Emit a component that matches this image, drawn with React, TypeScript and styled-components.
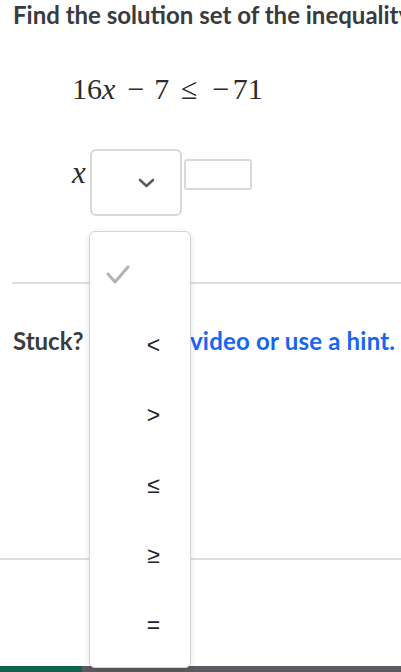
import styled, { createGlobalStyle } from "styled-components";

const GlobalStyle = createGlobalStyle`
  html, body {
    margin: 0;
    padding: 0;
    background: #ffffff;
    overflow: hidden;
  }
  body {
    font-family: Lato, "Noto Sans", sans-serif;
  }
`;

const Page = styled.div`
  position: relative;
  min-height: 672px;
  display: flex;
  flex-direction: column;
  overflow: hidden;
`;

const Content = styled.div`
  padding-left: 13px;
`;

const Title = styled.h2`
  margin: 0;
  font-size: 24px;
  line-height: 30px;
  font-weight: 700;
  color: #393b3f;
  white-space: nowrap;
`;

const MathLine = styled.div`
  margin: 41px 0 0 59px;
  font-family: "Liberation Serif", "Times New Roman", serif;
  font-size: 30px;
  line-height: 36px;
  color: #2b2b2b;
  white-space: nowrap;
`;

const Var = styled.span`
  font-style: italic;
  margin-right: 0.08em;
`;

const Op = styled.span<{ $space: number }>`
  display: inline-block;
  width: 0.778em;
  text-align: center;
  margin: 0 ${(p) => p.$space}em;
`;

const Minus = styled.span`
  display: inline-block;
  width: 0.778em;
  text-align: center;
`;

const AnswerRow = styled.div`
  margin: 42px 0 0 59px;
  display: flex;
  align-items: flex-start;
  gap: 2px;
`;

const VarLabel = styled.span`
  width: 16px;
  margin-top: 6px;
  font-family: "Liberation Serif", "Times New Roman", serif;
  font-style: italic;
  font-size: 31px;
  line-height: 36px;
  color: #2b2b2b;
`;

const Select = styled.div`
  box-sizing: border-box;
  width: 92px;
  height: 67px;
  border: 2px solid #d9d9d9;
  border-radius: 6px;
  display: flex;
  align-items: center;
  justify-content: flex-end;
  padding-right: 25px;
  background: #fff;
`;

const TextInput = styled.div`
  box-sizing: border-box;
  margin-top: 10px;
  width: 68px;
  height: 31px;
  border: 2px solid #d9d9d9;
  border-radius: 3px;
`;

const Rule = styled.div<{ $inset?: number }>`
  height: 2px;
  background: #e0e0e0;
  margin-left: ${(p) => p.$inset ?? 0}px;
`;

const Stuck = styled.p`
  margin: 42px 0 0;
  font-size: 24px;
  line-height: 30px;
  font-weight: 700;
  color: #393b3f;
  white-space: nowrap;
`;

const HintLink = styled.span`
  margin-left: 6px;
  color: #1865f2;
  letter-spacing: 0.2px;
`;

const Spacer = styled.div`
  flex: 1;
`;

const Footer = styled.div`
  height: 6px;
  display: flex;
  background: #5b5a5f;
`;

const FooterProgress = styled.div`
  width: 82px;
  background: #12604f;
`;

const Menu = styled.div`
  position: absolute;
  left: 89px;
  top: 231px;
  box-sizing: border-box;
  width: 102px;
  height: 437px;
  padding: 8px 0;
  background: #fff;
  border: 1px solid #d4d4d4;
  border-radius: 6px;
  box-shadow: 0 2px 6px rgba(0, 0, 0, 0.12);
`;

const MenuItem = styled.div`
  height: 70px;
  display: flex;
  align-items: center;
  padding: 0 15px 0 16px;
`;

const CheckSlot = styled.div`
  width: 26px;
  display: flex;
  align-items: center;
`;

const ItemLabel = styled.span`
  flex: 1;
  text-align: center;
  font-family: "Liberation Sans", Arial, sans-serif;
  font-size: 23px;
  color: #21242c;
`;

const Chevron = () => (
  <svg width="17" height="10" viewBox="0 0 17 10">
    <polyline
      points="2,2 8.5,8 15,2"
      fill="none"
      stroke="#5c5c5c"
      strokeWidth="2.6"
      strokeLinecap="round"
      strokeLinejoin="round"
    />
  </svg>
);

const Check = () => (
  <svg width="24" height="20" viewBox="0 0 24 20">
    <polyline
      points="2,9 9,17 22,2"
      fill="none"
      stroke="#b3b3b3"
      strokeWidth="3"
      strokeLinecap="round"
      strokeLinejoin="round"
    />
  </svg>
);

const options = ["", "<", ">", "≤", "≥", "="];

export default function App() {
  return (
    <Page>
      <GlobalStyle />
      <Content>
        <Title>Find the solution set of the inequality.</Title>
        <MathLine>
          16<Var>x</Var>
          <Op $space={0.222}>−</Op>7<Op $space={0.278}>≤</Op>
          <Minus>−</Minus>71
        </MathLine>
        <AnswerRow>
          <VarLabel>x</VarLabel>
          <Select>
            <Chevron />
          </Select>
          <TextInput />
        </AnswerRow>
      </Content>
      <Rule $inset={12} style={{ marginTop: 66 }} />
      <Content>
        <Stuck>
          Stuck?<HintLink> Watch a video or use a hint.</HintLink>
        </Stuck>
      </Content>
      <Rule style={{ marginTop: 202 }} />
      <Spacer />
      <Footer>
        <FooterProgress />
      </Footer>
      <Menu>
        {options.map((opt, i) => (
          <MenuItem key={i}>
            <CheckSlot>{i === 0 && <Check />}</CheckSlot>
            <ItemLabel>{opt}</ItemLabel>
          </MenuItem>
        ))}
      </Menu>
    </Page>
  );
}
